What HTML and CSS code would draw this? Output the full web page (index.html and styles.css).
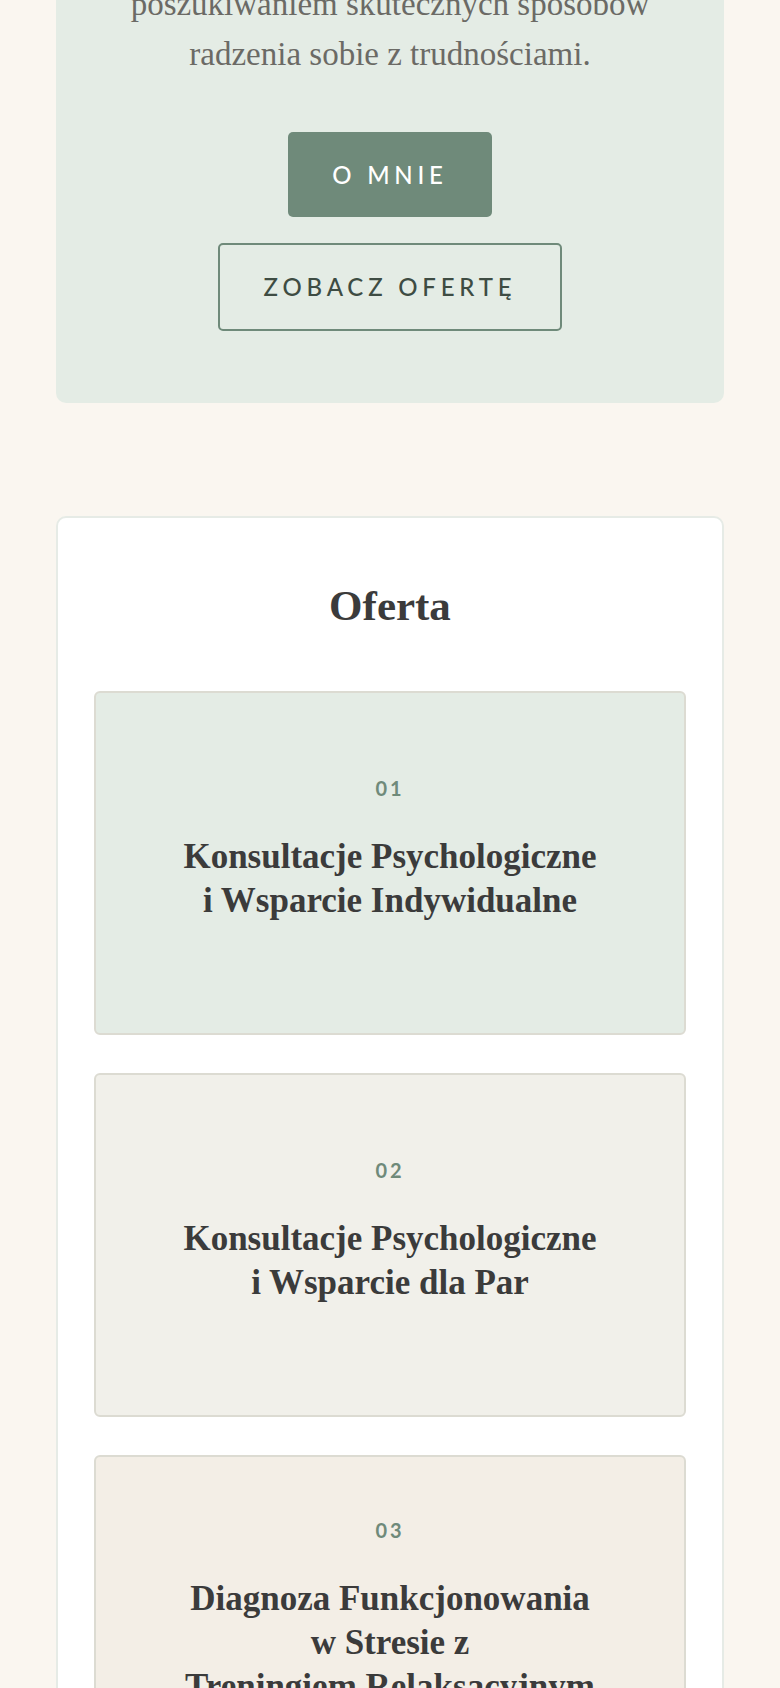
FILE: index.html
```html
<!DOCTYPE html>
<html lang="pl">
<head>
    <meta charset="utf-8">
    <title>Gabinet psychologiczny</title>
    <link rel="stylesheet" href="styles.css">
</head>
<body>
<div class="page">
    <section class="hero">
        <p class="lead">poszukiwaniem skutecznych sposobów radzenia sobie z trudnościami.</p>
        <div class="actions">
            <a class="btn btn-solid" href="#o-mnie">O mnie</a>
            <a class="btn btn-outline" href="#oferta">Zobacz ofertę</a>
        </div>
    </section>

    <section class="offer" id="oferta">
        <h2>Oferta</h2>
        <div class="services">
            <div class="service service-green">
                <span class="num">01</span>
                <h3>Konsultacje Psychologiczne<br>i Wsparcie Indywidualne</h3>
            </div>
            <div class="service service-grey">
                <span class="num">02</span>
                <h3>Konsultacje Psychologiczne<br>i Wsparcie dla Par</h3>
            </div>
            <div class="service service-sand">
                <span class="num">03</span>
                <h3>Diagnoza Funkcjonowania<br>w Stresie z<br>Treningiem Relaksacyjnym</h3>
            </div>
        </div>
    </section>
</div>
</body>
</html>
```

FILE: styles.css
```css
body {
    margin: 0;
    background-color: #faf6f0;
    font-family: "Liberation Serif", serif;
    color: #3b3b3b;
}

.page {
    padding: 0 56px;
}

/* intro block */
.hero {
    margin-top: -77px;
    padding: 56px 40px 72px;
    background-color: #e4ece5;
    border-radius: 10px;
    text-align: center;
}

.lead {
    max-width: 560px;
    margin: 0 auto 53px;
    font-size: 33px;
    line-height: 50px;
    color: #6b6a65;
}

.actions {
    display: flex;
    flex-direction: column;
    align-items: center;
    gap: 26px;
}

.btn {
    display: block;
    box-sizing: border-box;
    padding: 0 44px;
    border-radius: 5px;
    font-family: Lato, "Liberation Sans", sans-serif;
    font-size: 24px;
    font-weight: 500;
    letter-spacing: 0.2em;
    text-transform: uppercase;
    text-decoration: none;
}

.btn-solid {
    height: 85px;
    line-height: 85px;
    background-color: #6f8a7a;
    color: #ffffff;
}

.btn-outline {
    height: 88px;
    line-height: 84px;
    border: 2px solid #6f8a7a;
    color: #3e4c43;
}

/* services */
.offer {
    margin-top: 113px;
    padding: 63px 36px 40px;
    background-color: #ffffff;
    border: 2px solid #e6ebe6;
    border-radius: 10px;
}

.offer h2 {
    margin: 0 0 60px;
    font-size: 43px;
    line-height: 50px;
    font-weight: bold;
    text-align: center;
}

.services {
    display: flex;
    flex-direction: column;
    gap: 38px;
}

.service {
    box-sizing: border-box;
    min-height: 344px;
    display: flex;
    flex-direction: column;
    justify-content: center;
    align-items: center;
    padding: 40px 30px;
    border: 2px solid #dcdbd2;
    border-radius: 6px;
    text-align: center;
}

.service-green {
    background-color: #e4ece5;
}

.service-grey {
    background-color: #f1f0ea;
}

.service-sand {
    background-color: #f3eee6;
}

.num {
    display: block;
    font-family: Lato, "Liberation Sans", sans-serif;
    font-size: 20px;
    line-height: 24px;
    font-weight: 700;
    letter-spacing: 3px;
    color: #6f8a7a;
}

.service h3 {
    margin: 35px 0 28px;
    font-size: 35px;
    line-height: 44px;
    font-weight: bold;
    color: #3b3b3b;
}
```
